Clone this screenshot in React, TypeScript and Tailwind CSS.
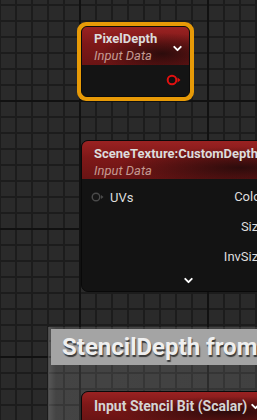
import { ChevronDown } from "lucide-react";

const headerBg =
  "bg-[radial-gradient(ellipse_at_75%_70%,rgba(20,8,8,0.75),transparent_55%),linear-gradient(to_bottom,#9a2222,#7e1818_45%,#6a1414)]";

const OutPin = ({ color }: { color: string }) => (
  <svg width="16" height="12" viewBox="0 0 16 12">
    <circle cx="6" cy="6" r="4.3" fill="#111" stroke={color} strokeWidth="2" />
    <path d="M11.5 3.5 L14.5 6 L11.5 8.5 Z" fill={color} />
  </svg>
);

const PixelDepthNode = () => (
  <div className="absolute left-[77px] top-[22px] w-[117px] h-[79px] rounded-[9px] bg-[#e79a07] p-[4px]">
    <div className="h-full rounded-[6px] bg-[#141414] overflow-hidden border border-[#0b0b0b]">
      <div className={`${headerBg} h-[38px] flex justify-between pl-[12px] pr-[5px] pt-[5px]`}>
        <div className="leading-none">
          <p className="text-[13px] font-bold text-[#dcdcdc]">PixelDepth</p>
          <p className="text-[13px] italic text-[#c49a92] mt-[4px]">Input Data</p>
        </div>
        <ChevronDown className="mt-[10px] text-white" size={13} strokeWidth={3.5} />
      </div>
      <div className="flex justify-end pr-[7px] pt-[9px]">
        <OutPin color="#e01010" />
      </div>
    </div>
  </div>
);

const SceneTextureNode = () => (
  <div className="absolute left-[81px] top-[140px] w-[214px] h-[152px] rounded-[7px] bg-[#131313] overflow-hidden border border-[#090909]">
    <div className={`${headerBg} h-[38px] pl-[12px] pt-[6px] leading-none`}>
      <p className="text-[13px] font-bold text-[#dcdcdc] whitespace-nowrap">SceneTexture:CustomDepth</p>
      <p className="text-[13px] italic text-[#c49a92] mt-[4px]">Input Data</p>
    </div>
    <div className="grid grid-cols-2 text-[13px] text-[#dedede] leading-none pt-[11px]">
      <div className="flex items-center gap-[5px] pl-[9px] h-[14px]">
        <svg width="14" height="10" viewBox="0 0 14 10">
          <circle cx="5" cy="5" r="3.8" fill="#161616" stroke="#4a4a4a" strokeWidth="1.4" />
          <path d="M10 3 L12.5 5 L10 7 Z" fill="#4a4a4a" />
        </svg>
        <span>UVs</span>
      </div>
      <div className="flex flex-col items-end gap-[16px] pr-[29px] whitespace-nowrap">
        <span className="h-[14px]">Color</span>
        <span className="h-[14px]">Size</span>
        <span className="h-[14px]">InvSize</span>
      </div>
    </div>
    <div className="flex justify-center pt-[10px]">
      <ChevronDown className="text-white" size={13} strokeWidth={3.5} />
    </div>
  </div>
);

const CommentBox = () => (
  <div className="absolute left-[48px] top-[327px] w-[260px] h-[120px] bg-[linear-gradient(to_right,rgba(255,255,255,0.22),rgba(255,255,255,0.12)_8px,rgba(255,255,255,0.1))] pl-[3px] pt-[2px]">
    <div className="h-[36px] bg-[#a4a4a4] pl-[11px] flex items-center">
      <span className="text-[24px] font-bold text-[#efefef] whitespace-nowrap [text-shadow:1px_2px_1px_#3a3a3a]">
        StencilDepth from
      </span>
    </div>
  </div>
);

const StencilNode = () => (
  <div className="absolute left-[81px] top-[391px] w-[200px] h-[40px] rounded-t-[7px] bg-[#131313] overflow-hidden border border-[#090909]">
    <div className={`${headerBg} h-[28px] flex justify-between items-center pl-[12px] pr-[18px]`}>
      <span className="text-[14px] font-bold text-[#d4d4d4] whitespace-nowrap">Input Stencil Bit (Scalar)</span>
      <ChevronDown className="text-white shrink-0" size={13} strokeWidth={3.5} />
    </div>
  </div>
);

export default function App() {
  return (
    <div className="relative w-[257px] h-[420px] overflow-hidden font-['Roboto',sans-serif] bg-[#2a2a2a] bg-[linear-gradient(to_right,#111_2px,transparent_2px),linear-gradient(to_bottom,#111_2px,transparent_2px),linear-gradient(to_right,#1c1c1c_2px,transparent_2px),linear-gradient(to_bottom,#1c1c1c_2px,transparent_2px)] bg-size-[128px_128px,128px_128px,16px_16px,16px_16px] bg-position-[79px_0,0_100px,15px_0,0_4px]">
      <PixelDepthNode />
      <SceneTextureNode />
      <CommentBox />
      <StencilNode />
    </div>
  );
}
